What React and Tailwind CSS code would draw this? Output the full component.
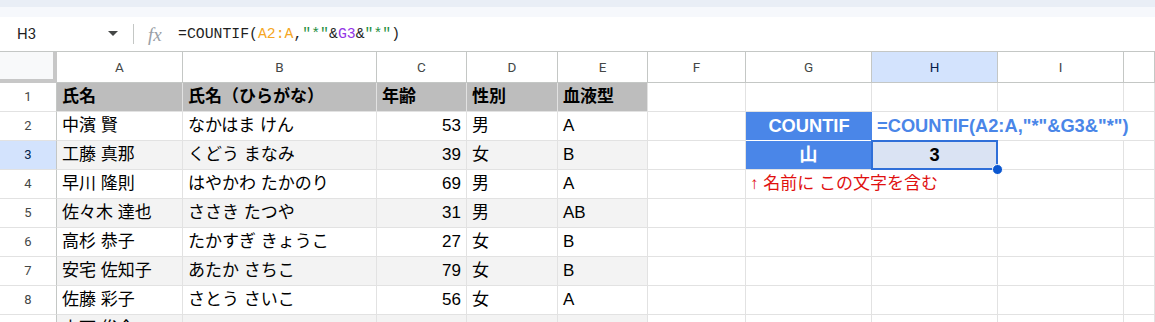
import React from 'react';

const cellFont = "font-['Liberation_Sans','Noto_Sans_CJK_JP',sans-serif]";

const data = [
  ['中濱 賢', 'なかはま けん', 53, '男', 'A'],
  ['工藤 真那', 'くどう まなみ', 39, '女', 'B'],
  ['早川 隆則', 'はやかわ たかのり', 69, '男', 'A'],
  ['佐々木 達也', 'ささき たつや', 31, '男', 'AB'],
  ['高杉 恭子', 'たかすぎ きょうこ', 27, '女', 'B'],
  ['安宅 佐知子', 'あたか さちこ', 79, '女', 'B'],
  ['佐藤 彩子', 'さとう さいこ', 56, '女', 'A'],
  ['山下 俊介', '', '', '', ''],
];

const letters = ['A', 'B', 'C', 'D', 'E', 'F', 'G', 'H', 'I', ''];

// formula bar on top
const FormulaBar = () => (
  <div className="flex items-center h-[35px] bg-white border-b border-[#c4c7c5]">
    <div className="w-[133px] flex items-center pl-[17px] pr-[14px] justify-between">
      <span className="font-['Roboto',sans-serif] text-[15px] text-[#1f1f1f]">H3</span>
      <svg width="10" height="6" viewBox="0 0 10 6" className="mr-[1px]">
        <path d="M0 0 L10 0 L5 5 Z" fill="#444746" />
      </svg>
    </div>
    <div className="w-px h-[20px] bg-[#c4c7c5]" />
    <span className="ml-[14px] w-[30px] font-['Liberation_Serif',serif] italic text-[19px] text-[#9aa0a6] leading-none">fx</span>
    <span className="font-['Liberation_Mono',monospace] text-[14.8px] text-[#1f1f1f] whitespace-nowrap">
      =COUNTIF(<span className="text-[#f5a623]">A2:A</span>,<span className="text-[#1e8e3e]">"*"</span>&amp;<span className="text-[#9334e6]">G3</span>&amp;<span className="text-[#1e8e3e]">"*"</span>)
    </span>
  </div>
);

const Cell = ({ children, className = '' }) => (
  <div className={`h-[29px] border-b border-r border-[#e2e2e2] flex items-center text-[17px] text-black ${cellFont} ${className}`}>
    {children}
  </div>
);

const RowNum = ({ n, active }) => (
  <div className={`h-[29px] border-b border-r border-[#c4c7c5] border-b-[#e2e2e2] flex items-center justify-center font-['Roboto',sans-serif] text-[13px] ${active ? 'bg-[#d3e3fd] text-[#041e49]' : 'bg-white text-[#444746]'}`}>
    {n}
  </div>
);

const extras = (rowIdx) => {
  // columns F..J for a given sheet row
  if (rowIdx === 2) {
    return (
      <>
        <Cell />
        <Cell className="bg-[#4a86e8] border-r-0 border-b-white justify-center">
          <span className="text-white font-bold text-[18.3px]">COUNTIF</span>
        </Cell>
        <Cell className="border-r-0 pl-[5px] overflow-visible">
          <span className="relative z-10 whitespace-nowrap text-[#4a86e8] font-bold text-[18.3px]">=COUNTIF(A2:A,"*"&amp;G3&amp;"*")</span>
        </Cell>
        <Cell className="border-r-0" />
        <Cell />
      </>
    );
  }
  if (rowIdx === 3) {
    return (
      <>
        <Cell />
        <Cell className="bg-[#4a86e8] border-r-[#4a86e8] justify-center">
          <span className="text-white font-bold text-[18.3px]">山</span>
        </Cell>
        <div className="relative h-[29px] border-b border-r border-[#e2e2e2]">
          <div className="absolute -left-[1px] -top-[1px] w-[127px] h-[30px] border-2 border-[#2f6fd8] bg-[#dae3f3] flex items-center justify-center font-['Liberation_Sans',sans-serif] font-bold text-[18.3px] text-black">
            3
          </div>
          <div className="absolute -right-[6px] -bottom-[6px] w-[11px] h-[11px] rounded-full bg-[#0b57d0] border border-white z-20" />
        </div>
        <Cell />
        <Cell />
      </>
    );
  }
  if (rowIdx === 4) {
    return (
      <>
        <Cell />
        <Cell className="border-r-0 pl-[4px] overflow-visible">
          <span className="relative z-10 whitespace-nowrap text-[#e01010]">↑ 名前に この文字を含む</span>
        </Cell>
        <Cell />
        <Cell />
        <Cell />
      </>
    );
  }
  return (
    <>
      <Cell />
      <Cell />
      <Cell />
      <Cell />
      <Cell />
    </>
  );
};

const App = () => {
  return (
    <div className="w-[1155px] h-[322px] overflow-hidden bg-white">
      <div className="h-[7px] bg-[#e9eef6]" />
      <div className="h-[10px] bg-[#f6f8fc]" />
      <FormulaBar />
      <div className="grid grid-cols-[57px_126px_194px_90px_91px_90px_98px_126px_126px_126px_31px]">
        {/* column headers */}
        <div className="h-[31px] bg-[#f8f9fa] border-r-4 border-b-4 border-[#c7c7c7]" />
        {letters.map((l) => (
          <div
            key={l || 'J'}
            className={`h-[31px] border-r border-b border-[#c4c7c5] flex items-center justify-center font-['Roboto',sans-serif] text-[13.5px] ${l === 'H' ? 'bg-[#d3e3fd] text-[#041e49]' : 'bg-white text-[#444746]'}`}
          >
            {l}
          </div>
        ))}

        {/* row 1 */}
        <RowNum n={1} />
        {['氏名', '氏名（ひらがな）', '年齢', '性別', '血液型'].map((h) => (
          <Cell key={h} className="bg-[#bdbdbd] border-[#d0d0d0] font-bold pl-[5px]">{h}</Cell>
        ))}
        {extras(1)}

        {data.map((r, i) => {
          const n = i + 2;
          const band = n % 2 === 1 ? 'bg-[#f3f3f3]' : 'bg-white';
          return (
            <React.Fragment key={n}>
              <RowNum n={n} active={n === 3} />
              <Cell className={`${band} pl-[5px]`}>{r[0]}</Cell>
              <Cell className={`${band} pl-[5px]`}>{r[1]}</Cell>
              <Cell className={`${band} justify-end pr-[5px]`}>{r[2]}</Cell>
              <Cell className={`${band} pl-[5px]`}>{r[3]}</Cell>
              <Cell className={`${band} pl-[5px]`}>{r[4]}</Cell>
              {extras(n)}
            </React.Fragment>
          );
        })}
      </div>
    </div>
  );
};

export default App;
